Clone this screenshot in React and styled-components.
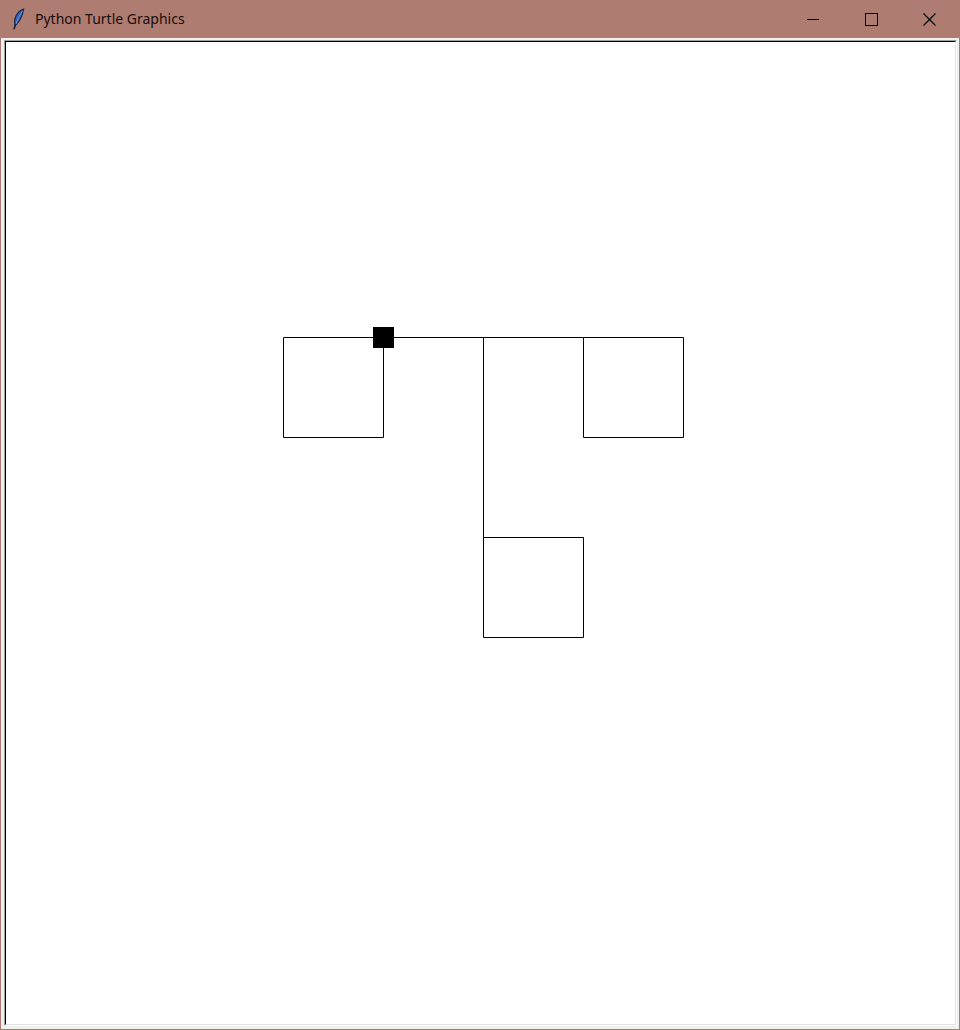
import React from "react";
import styled, { createGlobalStyle } from "styled-components";

const Global = createGlobalStyle`
  html, body { margin: 0; padding: 0; background: #ffffff; }
  #root { width: 960px; height: 1030px; }
`;

const Window = styled.div`
  width: 960px;
  height: 1030px;
  box-sizing: border-box;
  display: flex;
  flex-direction: column;
  background: #f0f0f0;
  border: 1px solid #af7c72;
  border-top: none;
`;

const TitleBar = styled.div`
  height: 38px;
  flex: none;
  margin: 0 -1px;
  background: #af7c72;
  display: flex;
  align-items: center;
`;

const AppIcon = styled.svg`
  width: 14px;
  height: 22px;
  margin-left: 11px;
  margin-right: 10px;
  margin-top: -1px;
  flex: none;
`;

const Title = styled.span`
  font-family: "Noto Sans", "DejaVu Sans", sans-serif;
  font-size: 14px;
  color: #1a0d0a;
  flex: 1;
  margin-top: -1px;
`;

const Controls = styled.div`
  display: flex;
  height: 100%;
  margin-right: 2px;
`;

const CtrlButton = styled.div`
  width: 58px;
  height: 100%;
  display: flex;
  align-items: center;
  justify-content: center;
`;

const Body = styled.div`
  flex: 1;
  display: flex;
  padding: 2px 2px 3px 3px;
  min-height: 0;
`;

const Canvas = styled.div`
  flex: 1;
  background: #ffffff;
  border-style: solid;
  border-width: 1px;
  border-color: #a0a0a0 #ffffff #ffffff #a0a0a0;
  position: relative;
  overflow: hidden;
`;

const CanvasInner = styled.div`
  position: absolute;
  inset: 0;
  border-style: solid;
  border-width: 1px;
  border-color: #000000 #e3e3e3 #e3e3e3 #000000;
`;

const Drawing = styled.svg`
  display: block;
  width: 100%;
  height: 100%;
`;

export default function App() {
  // page-pixel coordinates of the turtle drawing; canvas interior starts at (6,42)
  const squares = [
    [283, 337],
    [583, 337],
    [483, 537],
  ];
  return (
    <>
      <Global />
      <Window>
        <TitleBar>
          <AppIcon viewBox="0 0 14 22">
            <path
              d="M12.6 1 C8.6 2.4 5 6.6 3.9 11 C3.3 13.3 3.4 15.2 4 16.8 L5.6 16.5 C8.9 12.8 11.6 7.4 12.6 1 Z"
              fill="#2f5fb3"
              stroke="#17264a"
              strokeWidth="1.1"
            />
            <path d="M11.4 3.2 C8.6 7.2 6.4 11.6 4.9 16.2" stroke="#8fb0e6" strokeWidth="0.7" fill="none" />
            <path d="M4.5 16.4 L3.1 20.8" stroke="#141a28" strokeWidth="1.5" fill="none" strokeLinecap="round" />
          </AppIcon>
          <Title>Python Turtle Graphics</Title>
          <Controls>
            <CtrlButton>
              <svg width="12" height="12" viewBox="0 0 12 12">
                <path d="M0 6.5 H12" stroke="#000" strokeWidth="1" />
              </svg>
            </CtrlButton>
            <CtrlButton>
              <svg width="13" height="13" viewBox="0 0 13 13">
                <rect x="0.5" y="0.5" width="12" height="12" fill="none" stroke="#000" strokeWidth="1" />
              </svg>
            </CtrlButton>
            <CtrlButton>
              <svg width="13" height="13" viewBox="0 0 13 13">
                <path d="M0.5 0.5 L12.5 12.5 M12.5 0.5 L0.5 12.5" stroke="#000" strokeWidth="1.1" />
              </svg>
            </CtrlButton>
          </Controls>
        </TitleBar>
        <Body>
          <Canvas>
            <CanvasInner>
              <Drawing>
                <g transform="translate(-5.5,-41.5)" fill="none" stroke="#000" strokeWidth="1">
                  {squares.map(([x, y]) => (
                    <path key={`${x}-${y}`} d={`M${x} ${y} H${x + 100} V${y + 100} H${x} Z`} />
                  ))}
                  <path d="M383 337 H583" />
                  <path d="M483 337 V537" />
                </g>
                <rect x={373 - 6} y={327 - 42} width="21" height="21" fill="#000" />
              </Drawing>
            </CanvasInner>
          </Canvas>
        </Body>
      </Window>
    </>
  );
}
